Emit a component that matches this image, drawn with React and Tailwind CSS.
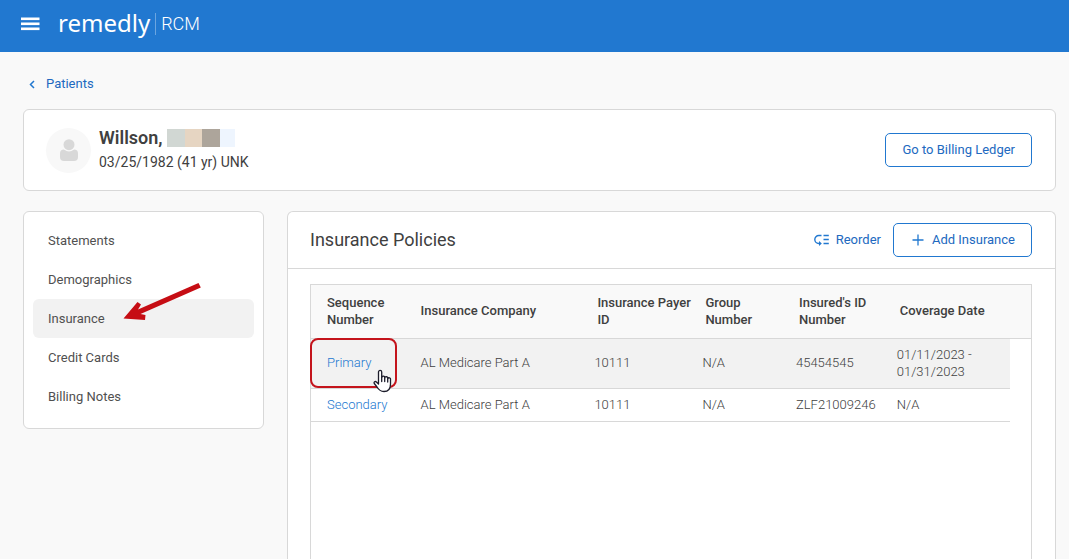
import React from 'react';

const navItems = ['Statements', 'Demographics', 'Insurance', 'Credit Cards', 'Billing Notes'];

const policies = [
    {
        sequence: 'Primary',
        company: 'AL Medicare Part A',
        payerId: '10111',
        group: 'N/A',
        insuredId: '45454545',
        coverage: '01/11/2023 - 01/31/2023',
    },
    {
        sequence: 'Secondary',
        company: 'AL Medicare Part A',
        payerId: '10111',
        group: 'N/A',
        insuredId: 'ZLF21009246',
        coverage: 'N/A',
    },
];

const Header = () => {
    return (
        <header className="flex h-[52px] shrink-0 items-center bg-[#2178d0] px-5 pb-1 text-white">
            <button type="button" aria-label="Menu" className="mr-4">
                <svg width="22" height="14" viewBox="0 0 22 14" fill="#fff" className="block">
                    <rect x="1" y="0.5" width="18.5" height="2.6" />
                    <rect x="1" y="5.5" width="18.5" height="2.6" />
                    <rect x="1" y="10.5" width="18.5" height="2.6" />
                </svg>
            </button>
            <a href="#" className="flex items-center">
                <span className="pb-0.5 font-['Noto_Sans'] text-2xl leading-6">remedly</span>
                <span className="mx-[5px] h-[22px] w-px bg-[#6ba5e0]"></span>
                <span className="text-lg leading-6 font-light">RCM</span>
            </a>
        </header>
    );
};

const PatientCard = () => {
    return (
        <section className="flex items-center rounded-md border border-[#d8d8d8] bg-white py-4 pr-[23px] pl-[22px]">
            <div className="flex h-[45px] w-[45px] items-center justify-center rounded-full bg-[#f8f8f8]">
                <svg width="18" height="22" viewBox="0 0 18 22" fill="#d8d8d8">
                    <rect x="0" y="10.5" width="18" height="11.5" rx="4" />
                    <circle cx="9" cy="5.7" r="6.8" fill="#f8f8f8" />
                    <circle cx="9" cy="5.7" r="5.5" />
                </svg>
            </div>
            <div className="ml-2 text-[#404040]">
                <div className="flex items-center">
                    <h1 className="text-lg leading-6 font-semibold">Willson,</h1>
                    {/* Masked first name */}
                    <div className="ml-1 flex h-[18px]">
                        <span className="w-[18px] bg-[#d1d7d3]"></span>
                        <span className="w-[17px] bg-[#e6d5c2]"></span>
                        <span className="w-[18px] bg-[#ada59b]"></span>
                        <span className="w-[15px] bg-[#eef5fe]"></span>
                    </div>
                </div>
                <p className="text-sm leading-6">03/25/1982 (41 yr) UNK</p>
            </div>
            <button
                type="button"
                className="ml-auto h-[34px] rounded-[5px] border border-[#2178d0] px-4 text-[13px] text-[#2169c0]"
            >
                Go to Billing Ledger
            </button>
        </section>
    );
};

const Sidebar = () => {
    return (
        <nav className="w-[241px] shrink-0 self-start rounded-md border border-[#d8d8d8] bg-white px-[9px] pt-[9px] pb-3">
            <ul className="flex flex-col">
                {navItems.map((item) => (
                    <li key={item} className="relative">
                        <a
                            href="#"
                            className={`block rounded-md px-[15px] text-[13px] leading-[39px] text-[#505050] ${
                                item === 'Insurance' ? 'bg-[#f2f2f2]' : ''
                            }`}
                        >
                            {item}
                        </a>
                        {item === 'Insurance' && (
                            <svg
                                width="80"
                                height="40"
                                viewBox="0 0 80 40"
                                fill="#c60d14"
                                className="pointer-events-none absolute -top-4 left-[90px]"
                            >
                                <path d="M0.5 35.5 L14.5 19 L18 21.5 L15 26.5 L75.5 0 L77.8 4.500 L17.500 31 L22.500 32 L22 37 Z" />
                            </svg>
                        )}
                    </li>
                ))}
            </ul>
        </nav>
    );
};

const HandCursor = () => {
    return (
        <svg
            width="20"
            height="24"
            viewBox="0 0 20 24"
            className="pointer-events-none absolute top-[30px] left-[62px]"
            fill="#fff"
            stroke="#1d1d2b"
            strokeWidth="1.3"
            strokeLinejoin="round"
            strokeLinecap="round"
        >
            <path d="M5.5 15V3a1.6 1.6 0 0 1 3.2 0V8.5a1.5 1.5 0 0 1 3 .4 1.5 1.5 0 0 1 3 .7 1.5 1.5 0 0 1 2.8 1V15c0 4-1.8 7.5-6.5 7.5-3.8 0-5.2-1.4-7-4.5L1.3 14.5c-.8-1.5.9-2.6 2.1-1.5Z" />
            <path d="M8.7 8v4.5M11.7 9v3.5M14.7 10v3" fill="none" />
        </svg>
    );
};

const PolicyTable = () => {
    return (
        <table className="w-full table-fixed border-separate border-spacing-0 text-left text-[13px] leading-[17px] text-[#404040]">
            <colgroup>
                <col className="w-[13%]" />
                <col className="w-[24%]" />
                <col className="w-[15%]" />
                <col className="w-[13%]" />
                <col className="w-[14%]" />
                <col />
                <col className="w-[21px]" />
            </colgroup>
            <thead>
                <tr className="h-[54px] bg-[#f9f9f9] *:border-b *:border-[#d8d8d8] *:pb-0.5 *:font-medium">
                    <th className="pl-4">
                        Sequence
                        <br />
                        Number
                    </th>
                    <th className="pl-4">Insurance Company</th>
                    <th className="pl-5 whitespace-nowrap">
                        Insurance Payer
                        <br />
                        ID
                    </th>
                    <th className="pl-5">
                        Group
                        <br />
                        Number
                    </th>
                    <th className="pl-5">
                        Insured's ID
                        <br />
                        Number
                    </th>
                    <th className="pl-5">Coverage Date</th>
                    <td></td>
                </tr>
            </thead>
            <tbody className="font-light">
                {policies.map((policy, i) => {
                    const cell = `border-b border-[#d8d8d8] pt-1.5 pb-2 ${i === 0 ? 'h-[50px] bg-[#f2f2f2]' : 'h-[33px]'}`;
                    return (
                        <tr key={policy.sequence}>
                            <td className={`${cell} relative pl-4`}>
                                <a href="#" className="text-[#2178d0]">
                                    {policy.sequence}
                                </a>
                                {i === 0 && (
                                    <>
                                        <span className="pointer-events-none absolute -top-px -left-px h-[50px] w-[87px] rounded-lg border-2 border-[#c4141c]"></span>
                                        <HandCursor />
                                    </>
                                )}
                            </td>
                            <td className={`${cell} pl-4`}>{policy.company}</td>
                            <td className={`${cell} pl-[17px]`}>{policy.payerId}</td>
                            <td className={`${cell} pl-[17px]`}>{policy.group}</td>
                            <td className={`${cell} pl-[17px]`}>{policy.insuredId}</td>
                            <td className={`${cell} pr-6 pl-[17px]`}>{policy.coverage}</td>
                            <td></td>
                        </tr>
                    );
                })}
            </tbody>
        </table>
    );
};

const InsurancePanel = () => {
    return (
        <section className="flex min-w-0 flex-1 flex-col rounded-t-md border border-b-0 border-[#d8d8d8] bg-white">
            <div className="flex h-[57px] items-center border-b border-[#d8d8d8] pr-[23px] pl-[22px]">
                <h2 className="text-lg text-[#404040]">Insurance Policies</h2>
                <div className="ml-auto flex items-center gap-3 text-[13px] text-[#2169c0]">
                    <button type="button" className="flex items-center gap-1.5">
                        <svg width="16" height="12" viewBox="0 0 16 12" fill="none" stroke="#2178d0" strokeWidth="1.4">
                            <path d="M7.5 1.5H4.8a4 4 0 0 0 0 8H6M9.5 1.5H14.8M9.5 5.5H14.8M9.5 9.5H14.8" />
                            <path d="M5 7L7.8 9.5L5 12Z" fill="#2178d0" stroke="none" />
                        </svg>
                        Reorder
                    </button>
                    <button
                        type="button"
                        className="flex h-[34px] items-center gap-2 rounded-[5px] border border-[#2178d0] pr-4 pl-[18px]"
                    >
                        <svg width="12" height="12" viewBox="0 0 12 12" stroke="#2178d0" strokeWidth="1.3">
                            <path d="M6 0.5V11.5M0.5 6H11.5" />
                        </svg>
                        Add Insurance
                    </button>
                </div>
            </div>
            <div className="mt-[15px] mr-[23px] ml-[22px] flex-1 border border-b-0 border-[#d8d8d8]">
                <PolicyTable />
            </div>
        </section>
    );
};

const App = () => {
    return (
        <div className="flex min-h-screen flex-col bg-[#f9f9f9] font-[Roboto,'Liberation_Sans',sans-serif]">
            <Header />
            <main className="flex flex-1 flex-col pr-[13px] pl-[23px]">
                <a href="#" className="mt-5 mb-[13px] flex items-center gap-2.5 self-start pl-1.5 text-[13px] leading-6 text-[#2169c0]">
                    <svg width="7" height="9" viewBox="0 0 7 9" fill="none" stroke="#2178d0" strokeWidth="1.5">
                        <path d="M5 1L1.5 4.5L5 8" />
                    </svg>
                    Patients
                </a>
                <PatientCard />
                <div className="mt-5 flex flex-1 gap-[23px]">
                    <Sidebar />
                    <InsurancePanel />
                </div>
            </main>
        </div>
    );
};

export default App;
